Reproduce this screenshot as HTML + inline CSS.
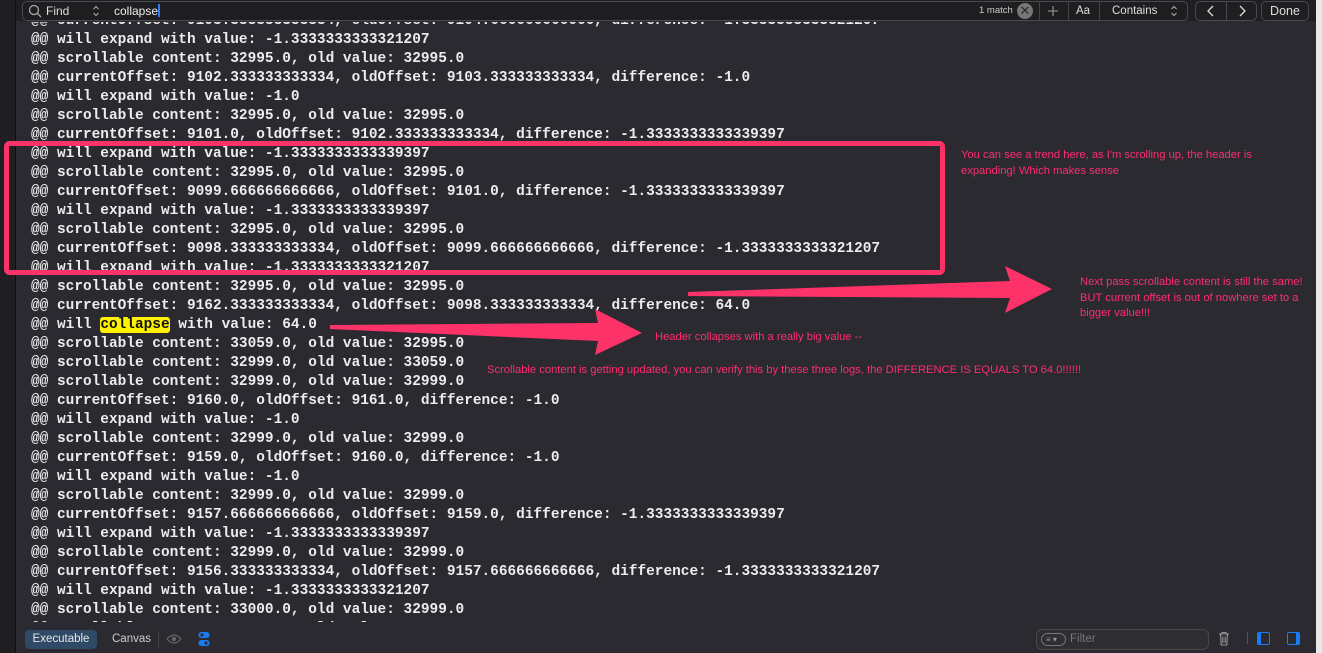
<!DOCTYPE html>
<html><head><meta charset="utf-8"><style>
*{margin:0;padding:0;box-sizing:border-box}
body{width:1322px;height:653px;background:#2a2a30;position:relative;overflow:hidden;font-family:"Liberation Sans",sans-serif}
#top{position:absolute;left:0;top:0;width:1316px;height:21px;background:#1f1f21}
#gut{position:absolute;left:0;top:0;width:16px;height:653px;background:#1f1f22;border-right:1px solid #0e0e10}
#rs{position:absolute;left:1316px;top:0;width:6px;height:653px;background:#e9e9e9}
#log{position:absolute;left:31px;top:22px;width:1280px;height:600px;overflow:hidden}
#log pre{position:absolute;left:0;top:-10px;font-family:"Liberation Mono",monospace;font-weight:bold;font-size:14.45px;line-height:19px;color:#ededed}
.hl{background:#fff200;color:#111;border-radius:3px}
.ann{position:absolute;color:#ff2d6e;font-size:11.2px;line-height:15.5px}
.fb{position:absolute;top:1px;height:20px;border:1px solid #4a4a4e;border-radius:5px;color:#ddd;font-size:12px;line-height:18px}
#bot{position:absolute;left:17px;top:626px;width:1299px;height:27px;background:#2a2a30}
</style></head><body>
<div id="top"></div>
<div id="gut"></div>
<div id="rs"></div>
<div class="fb" style="left:22px;width:1166px;background:#1e1e20"></div>
<svg style="position:absolute;left:28px;top:4px" width="14" height="14"><circle cx="6" cy="6" r="4.5" fill="none" stroke="#aaa" stroke-width="1.3"/><line x1="9.3" y1="9.3" x2="13" y2="13" stroke="#aaa" stroke-width="1.3"/></svg>
<div style="position:absolute;left:46px;top:4px;color:#ddd;font-size:12px">Find</div>
<svg style="position:absolute;left:92px;top:5px" width="8" height="12"><path d="M1.5 4L4 1.5L6.5 4M1.5 8L4 10.5L6.5 8" fill="none" stroke="#aaa" stroke-width="1.1"/></svg>
<div style="position:absolute;left:114px;top:4px;color:#eee;font-size:12px">collapse<span style="display:inline-block;width:1.5px;height:13px;background:#2f7cf6;vertical-align:-2px"></span></div>
<div style="position:absolute;left:979px;top:5px;color:#ccc;font-size:9.5px">1 match</div>
<div style="position:absolute;left:1017px;top:3px;width:16px;height:16px;border-radius:8px;background:#777;color:#2a2a2a;font-size:13px;line-height:16px;text-align:center">✕</div>
<div style="position:absolute;left:1039px;top:1px;width:1px;height:20px;background:#444"></div>
<svg style="position:absolute;left:1047px;top:5px" width="12" height="12"><path d="M6 1V11M1 6H11" stroke="#999" stroke-width="1.1"/></svg>
<div style="position:absolute;left:1068px;top:1px;width:1px;height:20px;background:#444"></div>
<div style="position:absolute;left:1076px;top:5px;color:#ddd;font-size:11.5px">Aa</div>
<div style="position:absolute;left:1099px;top:1px;width:1px;height:20px;background:#444"></div>
<div style="position:absolute;left:1112px;top:5px;color:#ddd;font-size:11.5px">Contains</div>
<svg style="position:absolute;left:1170px;top:5px" width="8" height="12"><path d="M1.5 4L4 1.5L6.5 4M1.5 8L4 10.5L6.5 8" fill="none" stroke="#aaa" stroke-width="1.1"/></svg>
<div class="fb" style="left:1195px;width:62px"><div style="position:absolute;left:30px;top:0;width:1px;height:18px;background:#4a4a4e"></div>
<svg style="position:absolute;left:9px;top:3px" width="12" height="12"><path d="M8 1L3 6L8 11" fill="none" stroke="#ddd" stroke-width="1.3"/></svg>
<svg style="position:absolute;left:40px;top:3px" width="12" height="12"><path d="M4 1L9 6L4 11" fill="none" stroke="#ddd" stroke-width="1.3"/></svg></div>
<div class="fb" style="left:1261px;width:48px;text-align:center;font-size:12.5px">Done</div>
<div id="log"><pre>@@ currentOffset: 9103.333333333334, oldOffset: 9104.666666666666, difference: -1.3333333333321207
@@ will expand with value: -1.3333333333321207
@@ scrollable content: 32995.0, old value: 32995.0
@@ currentOffset: 9102.333333333334, oldOffset: 9103.333333333334, difference: -1.0
@@ will expand with value: -1.0
@@ scrollable content: 32995.0, old value: 32995.0
@@ currentOffset: 9101.0, oldOffset: 9102.333333333334, difference: -1.3333333333339397
@@ will expand with value: -1.3333333333339397
@@ scrollable content: 32995.0, old value: 32995.0
@@ currentOffset: 9099.666666666666, oldOffset: 9101.0, difference: -1.3333333333339397
@@ will expand with value: -1.3333333333339397
@@ scrollable content: 32995.0, old value: 32995.0
@@ currentOffset: 9098.333333333334, oldOffset: 9099.666666666666, difference: -1.3333333333321207
@@ will expand with value: -1.3333333333321207
@@ scrollable content: 32995.0, old value: 32995.0
@@ currentOffset: 9162.333333333334, oldOffset: 9098.333333333334, difference: 64.0
@@ will <span class="hl">collapse</span> with value: 64.0
@@ scrollable content: 33059.0, old value: 32995.0
@@ scrollable content: 32999.0, old value: 33059.0
@@ scrollable content: 32999.0, old value: 32999.0
@@ currentOffset: 9160.0, oldOffset: 9161.0, difference: -1.0
@@ will expand with value: -1.0
@@ scrollable content: 32999.0, old value: 32999.0
@@ currentOffset: 9159.0, oldOffset: 9160.0, difference: -1.0
@@ will expand with value: -1.0
@@ scrollable content: 32999.0, old value: 32999.0
@@ currentOffset: 9157.666666666666, oldOffset: 9159.0, difference: -1.3333333333339397
@@ will expand with value: -1.3333333333339397
@@ scrollable content: 32999.0, old value: 32999.0
@@ currentOffset: 9156.333333333334, oldOffset: 9157.666666666666, difference: -1.3333333333321207
@@ will expand with value: -1.3333333333321207
@@ scrollable content: 33000.0, old value: 32999.0
@@ scrollable content: 33000.0, old value: 33000.0</pre></div>
<svg style="position:absolute;left:0;top:0" width="1322" height="653">
<rect x="6.5" y="143.5" width="936" height="129" rx="3" fill="none" stroke="#fc3269" stroke-width="5"/>
<polygon points="688,292 1010,281 1005,266 1052,289 1005,313 1010,298 688,296" fill="#fc3269"/>
<polygon points="330,325 598,323 595,309 642,333 595,355 598,341 330,329" fill="#fc3269"/>
</svg>
<div class="ann" style="left:961px;top:148px">You can see a trend here, as I'm scrolling up, the header is<br>expanding! Which makes sense</div>
<div class="ann" style="left:1080px;top:275px">Next pass scrollable content is still the same!<br>BUT current offset is out of nowhere set to a<br>bigger value!!!</div>
<div class="ann" style="left:655px;top:330px">Header collapses with a really big value --</div>
<div class="ann" style="left:487px;top:363px">Scrollable content is getting updated, you can verify this by these three logs, the DIFFERENCE IS EQUALS TO 64.0!!!!!!</div>
<div id="bot"></div>
<div style="position:absolute;left:25px;top:630px;width:72px;height:19px;border-radius:4px;background:#2e4a66;color:#e6e6e6;font-size:11.5px;line-height:19px;text-align:center">Executable</div>
<div style="position:absolute;left:112px;top:633px;color:#ccc;font-size:11.5px">Canvas</div>
<div style="position:absolute;left:158px;top:631px;width:1px;height:16px;background:#444"></div>
<svg style="position:absolute;left:166px;top:633px" width="16" height="12"><path d="M1 6Q8-2 15 6Q8 14 1 6Z" fill="none" stroke="#666" stroke-width="1.2"/><circle cx="8" cy="6" r="2.2" fill="#666"/></svg>
<svg style="position:absolute;left:198px;top:631px" width="12" height="16"><rect x="0.5" y="1" width="11" height="6" rx="3" fill="#1a7cf5"/><rect x="0.5" y="9" width="11" height="6" rx="3" fill="#1a7cf5"/><circle cx="4" cy="4" r="1.6" fill="#2a2a30"/><circle cx="8" cy="12" r="1.6" fill="#2a2a30"/></svg>
<div style="position:absolute;left:1036px;top:629px;width:173px;height:21px;border:1px solid #48484c;border-radius:6px;background:#2e2e33"></div>
<div style="position:absolute;left:1041px;top:633px;width:25px;height:13px;border:1px solid #777;border-radius:7px;color:#999;font-size:8px;line-height:11px;padding-left:4px">≡ ▾</div>
<div style="position:absolute;left:1070px;top:633px;color:#777;font-size:11.5px">Filter</div>
<svg style="position:absolute;left:1218px;top:631px" width="12" height="15"><path d="M1 3H11M4 3V1.5H8V3M2.5 3.5L3.2 14H8.8L9.5 3.5M4.8 5.5V12M7.2 5.5V12" fill="none" stroke="#999" stroke-width="1.1"/></svg>
<div style="position:absolute;left:1247px;top:632px;width:1px;height:12px;background:#555"></div>
<div style="position:absolute;left:1257px;top:632px;width:13px;height:13px;border:1.5px solid #1a7cf5;border-radius:2px;border-left-width:4px"></div>
<div style="position:absolute;left:1287px;top:632px;width:13px;height:13px;border:1.5px solid #1a7cf5;border-radius:2px;border-right-width:4px"></div>
</body></html>
